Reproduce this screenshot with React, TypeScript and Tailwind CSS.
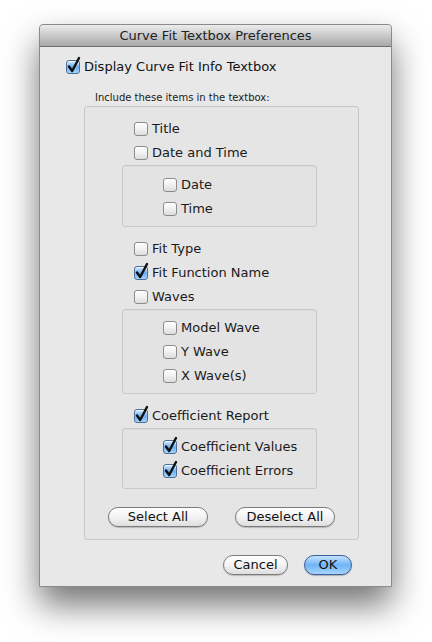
import React from "react";

const font = { fontFamily: '"DejaVu Sans", "Noto Sans", sans-serif' };

function Check({ checked }: { checked?: boolean }) {
  return (
    <span className="relative inline-block w-[14px] h-[14px] shrink-0">
      <span
        className={
          checked
            ? "absolute inset-0 rounded-[3px] border border-[#4a6f9a] bg-linear-to-b from-[#d6ecff] via-[#6aaef0] to-[#a4d4fb] shadow-[inset_0_1px_1px_rgba(255,255,255,0.8)]"
            : "absolute inset-0 rounded-[3px] border border-[#8c8c8c] bg-linear-to-b from-[#ffffff] via-[#f1f1f1] to-[#dcdcdc] shadow-[inset_0_1px_1px_rgba(255,255,255,0.9)]"
        }
      />
      {checked && (
        <svg className="absolute left-0 top-[-4px] w-[16px] h-[18px] overflow-visible" viewBox="0 0 16 18">
          <path d="M3 10.5 L6.2 15 L13 2" fill="none" stroke="#111" strokeWidth="2.4" strokeLinecap="round" strokeLinejoin="round" />
        </svg>
      )}
    </span>
  );
}

function Row({ label, checked, indent }: { label: string; checked?: boolean; indent: string }) {
  return (
    <div className={`flex items-center h-[24px] gap-[4px] ${indent} text-[13px] text-[#1a1a1a]`}>
      <Check checked={checked} />
      <span>{label}</span>
    </div>
  );
}

function Box({ children, className }: { children: React.ReactNode; className?: string }) {
  return (
    <div className={`ml-[37px] w-[195px] rounded-[3px] border border-[#c9c9c9] bg-[#e3e3e3] shadow-[inset_0_1px_0_rgba(0,0,0,0.04)] ${className ?? ""}`}>
      {children}
    </div>
  );
}

function Btn({ label, w, blue }: { label: string; w: string; blue?: boolean }) {
  return (
    <div
      className={`${w} h-[20px] rounded-full flex items-center justify-center text-[13px] text-[#111] ${
        blue
          ? "border border-[#3b5f9a] bg-linear-to-b from-[#c6e2fd] via-[#6fb4f4] to-[#a6d6fb] shadow-[0_1px_1px_rgba(0,0,0,0.25)]"
          : "border border-[#7b7b7b] bg-linear-to-b from-[#ffffff] via-[#f3f3f3] to-[#dedede] shadow-[0_1px_1px_rgba(0,0,0,0.2)]"
      }`}
    >
      {label}
    </div>
  );
}

export default function App() {
  return (
    <div className="w-[432px] h-[642px] bg-white overflow-hidden" style={font}>
      <div className="ml-[39px] mt-[24px] w-[353px] h-[563px] bg-[#e8e8e8] border border-[#8a8a8a] rounded-t-[4px] shadow-[0_18px_34px_rgba(0,0,0,0.55)] flex flex-col">
        {/* Title bar */}
        <div className="h-[22px] shrink-0 rounded-t-[4px] bg-linear-to-b from-[#ececec] to-[#a9a9a9] border-b border-[#6f6f6f] flex items-center justify-center text-[13px] text-[#222]">
          Curve Fit Textbox Preferences
        </div>

        <div className="flex items-center gap-[4px] ml-[26px] mt-[12px] h-[16px] text-[13px] text-[#111]">
          <Check checked />
          <span>Display Curve Fit Info Textbox</span>
        </div>

        <div className="ml-[55px] mt-[16px] text-[10px] text-[#1a1a1a] leading-[14px]">
          Include these items in the textbox:
        </div>

        {/* Group box */}
        <div className="ml-[44px] mt-[1px] w-[275px] rounded-[3px] border border-[#c6c6c6] bg-[#e5e5e5] pt-[10px] pb-[12px]">
          <Row label="Title" indent="ml-[49px]" />
          <Row label="Date and Time" indent="ml-[49px]" />
          <Box className="pt-[7px] pb-[5px]">
            <Row label="Date" indent="ml-[40px]" />
            <Row label="Time" indent="ml-[40px]" />
          </Box>
          <div className="h-[10px]" />
          <Row label="Fit Type" indent="ml-[49px]" />
          <Row label="Fit Function Name" checked indent="ml-[49px]" />
          <Row label="Waves" indent="ml-[49px]" />
          <Box className="pt-[6px] pb-[5px]">
            <Row label="Model Wave" indent="ml-[40px]" />
            <Row label="Y Wave" indent="ml-[40px]" />
            <Row label="X Wave(s)" indent="ml-[40px]" />
          </Box>
          <div className="h-[10px]" />
          <Row label="Coefficient Report" checked indent="ml-[49px]" />
          <Box className="pt-[6px] pb-[5px]">
            <Row label="Coefficient Values" checked indent="ml-[40px]" />
            <Row label="Coefficient Errors" checked indent="ml-[40px]" />
          </Box>
          <div className="flex justify-between px-[23px] mt-[18px]">
            <Btn label="Select All" w="w-[100px]" />
            <Btn label="Deselect All" w="w-[100px]" />
          </div>
        </div>

        <div className="flex justify-end gap-[16px] mr-[39px] mt-[15px]">
          <Btn label="Cancel" w="w-[65px]" />
          <Btn label="OK" w="w-[48px]" blue />
        </div>
      </div>
    </div>
  );
}
